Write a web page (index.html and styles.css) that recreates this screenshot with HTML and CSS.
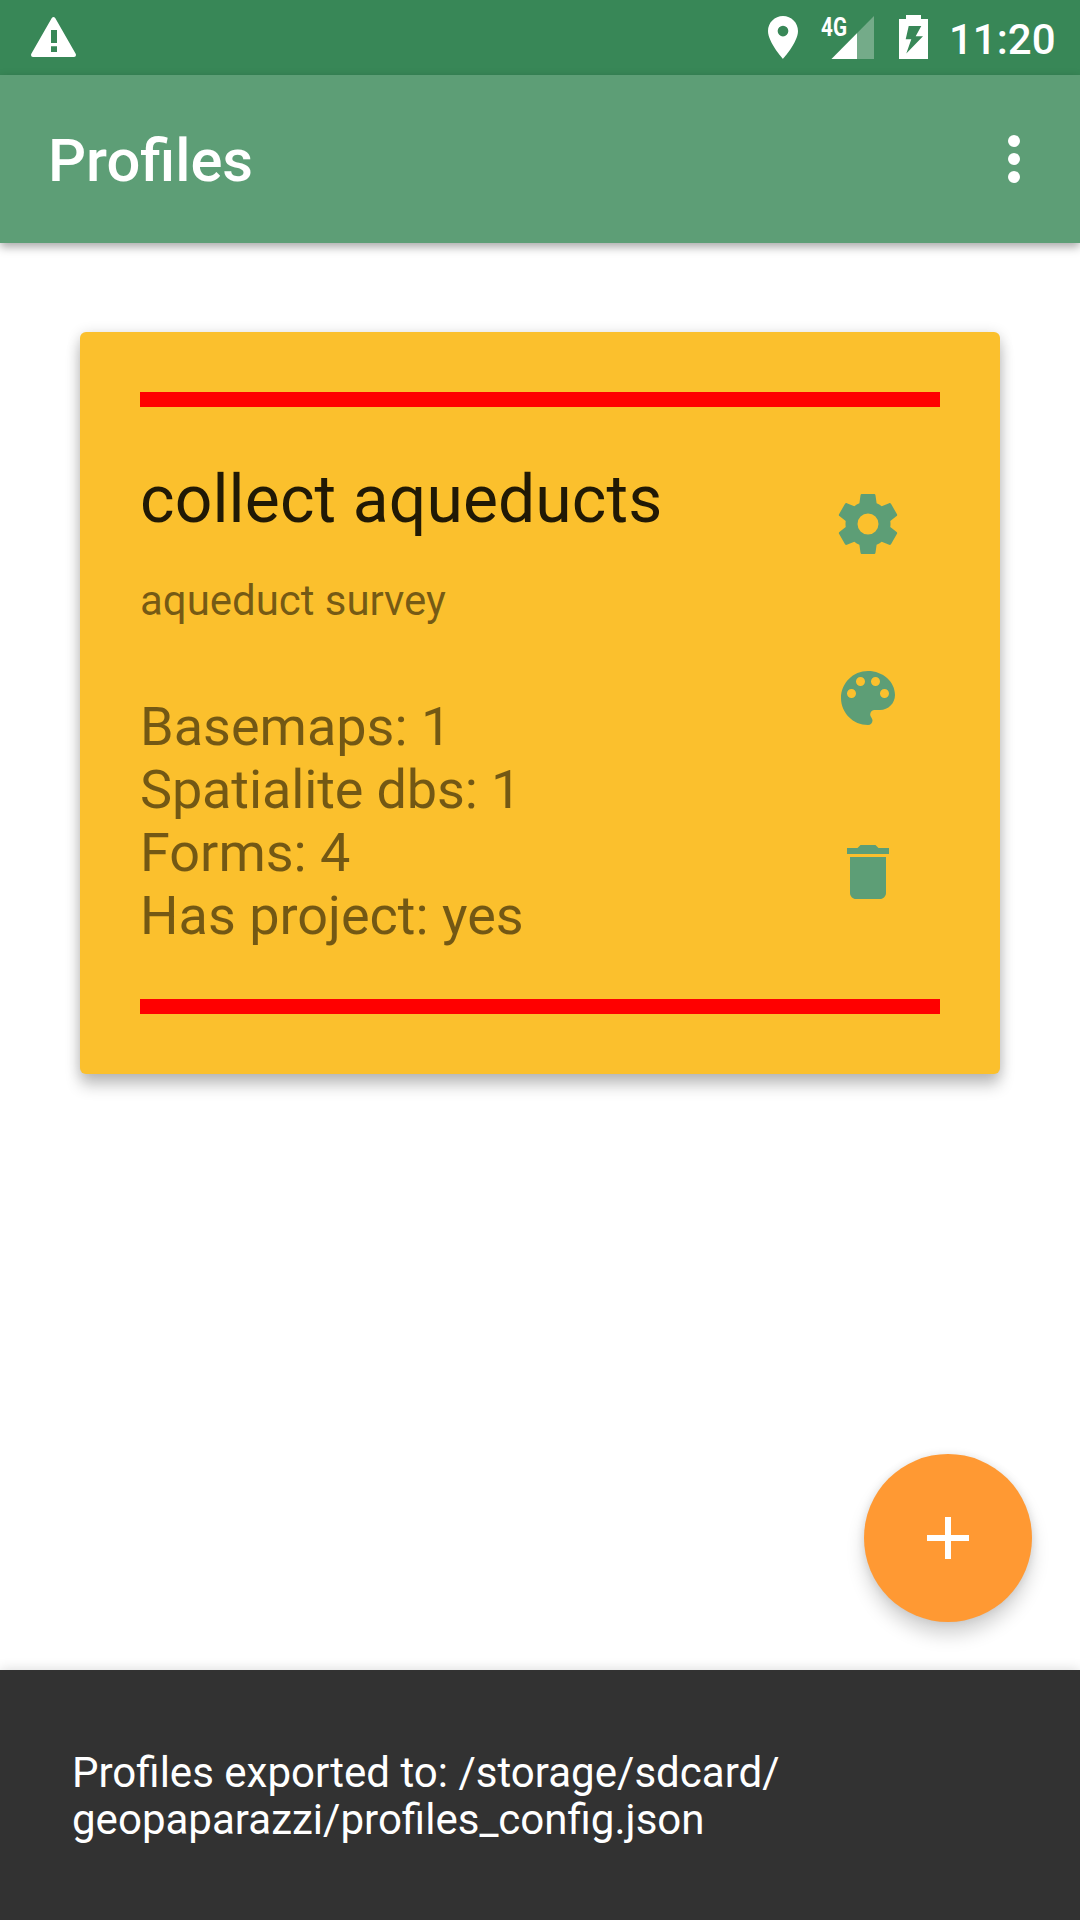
FILE: index.html
```html
<!DOCTYPE html>
<html lang="en">
<head>
<meta charset="utf-8">
<title>Profiles</title>
<link rel="stylesheet" href="styles.css">
</head>
<body>
<div class="screen">
  <header class="status-bar">
    <svg class="warning-icon" viewBox="0 0 45 40"><path fill="#fff" fill-rule="evenodd" d="M20.8 1Q22.500-1 24.200 1L44.800 37Q45.500 40 43 40H2Q-.5 40 .2 37ZM20 13V26H26V13ZM20 29.300V35H26V29.300Z"/></svg>
    <div class="status-icons">
      <svg class="location-icon" viewBox="5 2 14 20"><path fill="#fff" d="M12 2C8.130 2 5 5.130 5 9c0 5.250 7 13 7 13s7-7.750 7-13c0-3.870-3.130-7-7-7zm0 9.500a2.500 2.500 0 0 1 0-5 2.500 2.500 0 0 1 0 5z"/></svg>
      <svg class="signal-icon" viewBox="0 0 54 44"><path fill="#fff" fill-opacity=".3" d="M53 1V44H10.500Z"/><path fill="#fff" d="M36 18.300V44H10.500Z"/><text class="network" x="0" y="20.500" textLength="26" lengthAdjust="spacingAndGlyphs">4G</text></svg>
      <svg class="battery-icon" viewBox="0 0 29 44"><path fill="#fff" fill-rule="evenodd" d="M7 0H22V4H29V44H0V4H7ZM9.700 11L6.700 24.300H12.300L7.300 38.500L24 21.300H16.700L22.300 11Z"/></svg>
      <span class="clock">11:20</span>
    </div>
  </header>
  <div class="toolbar">
    <h1 class="toolbar-title">Profiles</h1>
    <svg class="overflow-icon" viewBox="0 0 12 48"><g fill="#fff"><circle cx="6" cy="6" r="6"/><circle cx="6" cy="24" r="6"/><circle cx="6" cy="42" r="6"/></g></svg>
  </div>
  <main class="content">
    <article class="card">
      <div class="stripe"></div>
      <div class="card-body">
        <div class="card-text">
          <h2 class="card-title">collect aqueducts</h2>
          <p class="card-subtitle">aqueduct survey</p>
          <ul class="stats">
            <li>Basemaps: 1</li>
            <li class="tight">Spatialite dbs: 1</li>
            <li>Forms: 4</li>
            <li>Has project: yes</li>
          </ul>
        </div>
        <div class="actions">
          <svg class="action-icon" viewBox="0 0 24 24"><path d="M19.430 12.980c.04-.32.07-.64.07-.98s-.03-.66-.07-.98l2.110-1.650c.19-.15.24-.42.12-.64l-2-3.460c-.12-.22-.39-.3-.61-.22l-2.490 1c-.52-.4-1.080-.73-1.690-.98l-.38-2.650C14.460 2.180 14.250 2 14 2h-4c-.25 0-.46.18-.49.42l-.38 2.650c-.61.25-1.170.59-1.690.98l-2.490-1c-.23-.09-.49 0-.61.22l-2 3.460c-.13.22-.07.49.12.64l2.110 1.650c-.04.32-.07.65-.07.98s.03.66.07.98l-2.110 1.650c-.19.15-.24.42-.12.64l2 3.460c.12.22.39.3.61.22l2.490-1c.52.4 1.080.73 1.690.98l.38 2.650c.03.24.24.42.49.42h4c.25 0 .46-.18.49-.42l.38-2.650c.61-.25 1.170-.59 1.690-.98l2.490 1c.23.09.49 0 .61-.22l2-3.460c.12-.22.07-.49-.12-.64l-2.110-1.650zM12 15.500a3.500 3.500 0 0 1 0-7 3.500 3.500 0 0 1 0 7z"/></svg>
          <svg class="action-icon" viewBox="0 0 24 24"><path d="M12 3c-4.970 0-9 4.030-9 9s4.030 9 9 9c.83 0 1.500-.67 1.500-1.500 0-.39-.15-.74-.39-1.010-.23-.26-.38-.61-.38-.99 0-.83.67-1.500 1.500-1.500H16c2.760 0 5-2.240 5-5 0-4.420-4.030-8-9-8zm-5.500 9a1.500 1.500 0 0 1 0-3 1.500 1.500 0 0 1 0 3zm3-4a1.500 1.500 0 0 1 0-3 1.500 1.500 0 0 1 0 3zm5 0a1.500 1.500 0 0 1 0-3 1.500 1.500 0 0 1 0 3zm3 4a1.500 1.500 0 0 1 0-3 1.500 1.500 0 0 1 0 3z"/></svg>
          <svg class="action-icon" viewBox="0 0 24 24"><path d="M6 19c0 1.100.9 2 2 2h8c1.100 0 2-.9 2-2V7H6v12zM19 4h-3.500l-1-1h-5l-1 1H5v2h14V4z"/></svg>
        </div>
      </div>
      <div class="stripe"></div>
    </article>
    <button class="fab" aria-label="Add profile"><svg class="fab-icon" viewBox="0 0 24 24"><path fill="#fff" d="M19 13h-6v6h-2v-6H5v-2h6V5h2v6h6z"/></svg></button>
  </main>
  <footer class="snackbar">Profiles exported to: /storage/sdcard/<br>geopaparazzi/profiles_config.json</footer>
</div>
</body>
</html>
```

FILE: styles.css
```css
* {
  box-sizing: border-box;
  margin: 0;
  padding: 0;
}

body {
  background: #fff;
  font-family: Roboto, "Liberation Sans", sans-serif;
}

svg {
  display: block;
  flex: none;
}

.screen {
  display: flex;
  flex-direction: column;
  width: 1080px;
  height: 1920px;
  overflow: hidden;
}

.status-bar {
  display: flex;
  justify-content: space-between;
  align-items: flex-start;
  height: 75px;
  padding: 15px 25px 0 31px;
  background: #388757;
}

.warning-icon {
  width: 45px;
  height: 40px;
  margin-top: 2px;
}

.status-icons {
  display: flex;
  align-items: flex-start;
}

.location-icon {
  width: 30px;
  height: 43px;
  margin: 1px 23px 0 0;
}

.signal-icon {
  width: 54px;
  height: 44px;
  margin-right: 24px;
  overflow: visible;
}

.network {
  fill: #fff;
  font-size: 25px;
  font-weight: 700;
}

.battery-icon {
  width: 29px;
  height: 44px;
  margin-right: 21px;
}

.clock {
  width: 106px;
  color: #fff;
  font-size: 42px;
  font-weight: 500;
  line-height: 49px;
  white-space: nowrap;
}

.toolbar {
  display: flex;
  align-items: center;
  justify-content: space-between;
  height: 168px;
  padding: 0 60px 0 48px;
  background: #5d9e76;
  box-shadow: 0 4px 9px rgba(0, 0, 0, 0.34);
}

.toolbar-title {
  padding-top: 4px;
  color: #fff;
  font-size: 59.7px;
  font-weight: 500;
  line-height: 71px;
}

.overflow-icon {
  width: 12px;
  height: 48px;
}

.content {
  display: flex;
  flex: 1;
  flex-direction: column;
  justify-content: space-between;
  padding: 89px 48px 48px 80px;
}

.card {
  width: 920px;
  height: 742px;
  padding: 60px;
  border-radius: 6px;
  background: #fbc02d;
  box-shadow: 0 12px 15px rgba(0, 0, 0, 0.2), 0 2px 14px rgba(0, 0, 0, 0.16);
}

.stripe {
  height: 15px;
  background: #f00;
}

.card-body {
  display: flex;
  justify-content: space-between;
  height: 592px;
  padding: 54px 36px 0 0;
}

.card-title {
  color: rgba(0, 0, 0, 0.87);
  font-size: 66px;
  font-weight: 400;
  letter-spacing: 0.12px;
  line-height: 77px;
}

.card-subtitle {
  margin-top: 38px;
  color: rgba(0, 0, 0, 0.54);
  font-size: 42px;
  letter-spacing: -0.04px;
  line-height: 49px;
}

.stats {
  margin-top: 70px;
  color: rgba(0, 0, 0, 0.54);
  font-size: 54px;
  line-height: 63px;
  list-style: none;
}

.tight {
  letter-spacing: -0.13px;
}

.actions {
  display: flex;
  flex-direction: column;
  gap: 102px;
  padding-top: 27px;
}

.action-icon {
  width: 72px;
  height: 72px;
  fill: #5d9e76;
}

.fab {
  display: flex;
  align-items: center;
  align-self: flex-end;
  justify-content: center;
  width: 168px;
  height: 168px;
  border: 0;
  border-radius: 50%;
  background: #ff9933;
  box-shadow: 0 13px 18px rgba(0, 0, 0, 0.17), 0 0 9px rgba(0, 0, 0, 0.1);
}

.fab-icon {
  width: 72px;
  height: 72px;
}

.snackbar {
  height: 250px;
  padding: 79px 72px 0;
  background: #323232;
  box-shadow: 0 0 12px rgba(0, 0, 0, 0.16);
  color: #fff;
  font-size: 42.06px;
  line-height: 47px;
}
```
